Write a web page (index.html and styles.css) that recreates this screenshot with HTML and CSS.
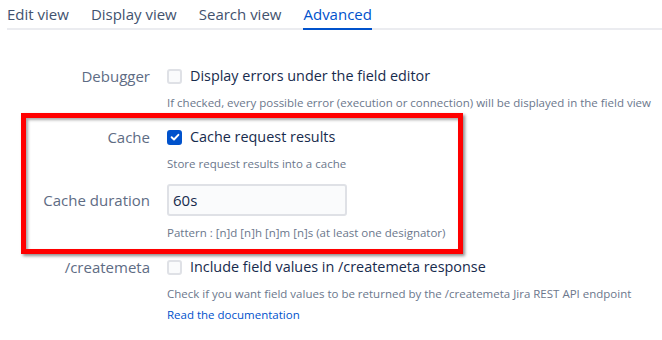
FILE: index.html
```html
<!DOCTYPE html>
<html>
<head>
<meta charset="utf-8">
<link rel="stylesheet" href="styles.css">
</head>
<body>
<div class="page">
  <nav class="tabs">
    <span class="tab">Edit view</span>
    <span class="tab">Display view</span>
    <span class="tab">Search view</span>
    <span class="tab active">Advanced</span>
  </nav>
  <div class="form">
    <div class="field">
      <div class="label">Debugger</div>
      <div class="control">
        <label class="check"><span class="box"></span>Display errors under the field editor</label>
        <div class="desc">If checked, every possible error (execution or connection) will be displayed in the field view</div>
      </div>
    </div>
    <div class="field">
      <div class="label">Cache</div>
      <div class="control">
        <label class="check"><span class="box checked"><svg viewBox="0 0 16 16" width="16" height="16"><path d="M4.6 8.2 L7 10.5 L11.4 5.8" fill="none" stroke="#fff" stroke-width="1.9" stroke-linecap="round" stroke-linejoin="round"/></svg></span>Cache request results</label>
        <div class="desc">Store request results into a cache</div>
      </div>
    </div>
    <div class="field field-input">
      <div class="label label-input">Cache duration</div>
      <div class="control">
        <div class="input">60s</div>
        <div class="desc">Pattern : [n]d [n]h [n]m [n]s (at least one designator)</div>
      </div>
    </div>
    <div class="field">
      <div class="label">/createmeta</div>
      <div class="control">
        <label class="check"><span class="box"></span>Include field values in /createmeta response</label>
        <div class="desc">Check if you want field values to be returned by the /createmeta Jira REST API endpoint</div>
        <a class="link">Read the documentation</a>
      </div>
    </div>
  </div>
  <div class="highlight"></div>
</div>
</body>
</html>
```
FILE: styles.css
```css
* { box-sizing: border-box; }
html, body { margin: 0; padding: 0; background: #fff; }
body {
  font-family: "Open Sans", "Noto Sans", sans-serif;
  color: #172b4d;
  width: 662px;
  height: 340px;
  overflow: hidden;
}
.page { position: relative; padding-left: 7px; }
.tabs {
  display: flex;
  gap: 22px;
  height: 30px;
  border-bottom: 2px solid #ebecf0;
  font-size: 15px;
}
.tab {
  color: #42526e;
  line-height: 28px;
  height: 30px;
  margin-bottom: -2px;
  border-bottom: 2px solid transparent;
}
.tab.active { color: #0052cc; border-bottom-color: #0052cc; }
.form { padding-top: 36px; }
.field {
  display: grid;
  grid-template-columns: 143px 1fr;
  column-gap: 17px;
  margin-bottom: 16px;
}
.field-input { margin-top: -4px; }
.label {
  text-align: right;
  color: #5e6c84;
  font-size: 15px;
  line-height: 20px;
}
.label-input { line-height: 32px; }
.check {
  display: flex;
  align-items: center;
  gap: 8px;
  font-size: 14.4px;
  line-height: 20px;
}
.box {
  width: 15px;
  height: 15px;
  border: 2px solid #dfe1e6;
  background: #fafbfc;
  border-radius: 3px;
  display: flex;
  align-items: center;
  justify-content: center;
}
.box.checked { background: #0052cc; border-color: #0052cc; }
.box svg { flex: none; }
.desc {
  margin-top: 9px;
  font-size: 11.5px;
  line-height: 16px;
  color: #6b778c;
  white-space: nowrap;
}
.input {
  width: 180px;
  height: 32px;
  border: 2px solid #dfe1e6;
  border-radius: 3px;
  background: #fafbfc;
  font-size: 15px;
  line-height: 28px;
  padding-left: 4px;
}
.link {
  display: block;
  margin-top: 5px;
  font-size: 11.5px;
  line-height: 16px;
  color: #0052cc;
}
.highlight {
  position: absolute;
  left: 21px;
  top: 113px;
  width: 442px;
  height: 141px;
  border: 5px solid #ff0000;
  box-shadow: 2px 2px 3px rgba(0,0,0,0.45), inset 2px 2px 3px rgba(0,0,0,0.35);
}
```
